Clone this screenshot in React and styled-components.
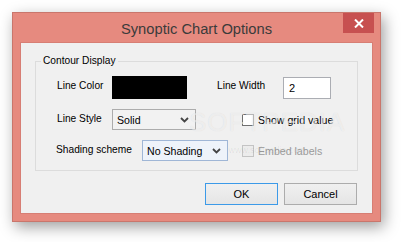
import React from 'react'
import styled, { createGlobalStyle } from 'styled-components'

const GlobalStyle = createGlobalStyle`
  html, body {
    margin: 0;
    padding: 0;
    background: #ffffff;
  }
  body {
    font-family: 'Liberation Sans', Arial, sans-serif;
  }
`

const Page = styled.div`
  width: 401px;
  height: 242px;
  padding: 12px 0 0 12px;
  box-sizing: border-box;
  overflow: hidden;
`

const Window = styled.div`
  width: 369px;
  height: 210px;
  box-sizing: border-box;
  background: #e68a7f;
  border: 1px solid #c9766c;
  box-shadow: 3px 5px 14px rgba(0, 0, 0, 0.38);
  display: flex;
  flex-direction: column;
  padding: 0 7px 7px 7px;
`

const TitleBar = styled.div`
  position: relative;
  height: 29px;
  display: flex;
  align-items: center;
  justify-content: center;
  flex-shrink: 0;
`

const Title = styled.span`
  font-size: 14.7px;
  color: #3b3b3b;
  margin-top: 2px;
`

const CloseButton = styled.div`
  position: absolute;
  top: 0;
  right: -1px;
  width: 31px;
  height: 20px;
  background: #c75050;
  display: flex;
  align-items: center;
  justify-content: center;
`

const Client = styled.div`
  flex: 1;
  background: #f0f0f0;
  border: 1px solid #d77e74;
  display: flex;
  flex-direction: column;
  padding: 0 14px 0 14px;
  position: relative;
  font-size: 10.2px;
  color: #000;
`

const Group = styled.fieldset`
  margin: 12px 0 0 0;
  padding: 9px 0 7px 0;
  border: 1px solid #dcdcdc;
  display: flex;
  flex-direction: column;
  gap: 10px;
  height: 116px;
  box-sizing: border-box;
`

const Legend = styled.legend`
  margin-left: 5px;
  padding: 0 3px 0 2px;
  font-size: 10.2px;
  line-height: 12px;
`

const Row = styled.div`
  display: flex;
  align-items: center;
  height: ${p => p.$h}px;
  padding-left: ${p => p.$indent}px;
`

const Label = styled.span`
  width: ${p => p.$w}px;
  flex-shrink: 0;
  margin-top: ${p => p.$dy || 0}px;
`

const Swatch = styled.div`
  width: 75px;
  height: 23px;
  background: #000;
  margin-right: 30px;
`

const TextBox = styled.div`
  width: 48px;
  height: 22px;
  box-sizing: border-box;
  border: 1px solid #abadb3;
  background: #fff;
  display: flex;
  align-items: center;
  padding-left: 5px;
  font-size: 11px;
`

const Select = styled.div`
  width: ${p => p.$w}px;
  height: 21px;
  box-sizing: border-box;
  border: 1px solid ${p => (p.$focus ? '#9fb6d6' : '#acacac')};
  background: ${p => (p.$focus ? '#eef3fa' : '#f2f2f2')};
  display: flex;
  align-items: center;
  justify-content: space-between;
  padding: 0 6px 0 4px;
  margin-right: ${p => p.$mr}px;
  font-size: 10.6px;
`

const Check = styled.label`
  display: flex;
  align-items: center;
  gap: 4px;
  color: ${p => (p.$disabled ? '#9a9a9a' : '#000')};
  font-size: 10.6px;
`

const Box = styled.span`
  width: 12px;
  height: 12px;
  box-sizing: border-box;
  border: 1px solid ${p => (p.$disabled ? '#c4c4c4' : '#707070')};
  background: ${p => (p.$disabled ? '#ececec' : '#fff')};
`

const Buttons = styled.div`
  display: flex;
  justify-content: flex-end;
  gap: 6px;
  margin-top: 12px;
  padding-right: 1px;
`

const Button = styled.div`
  width: 73px;
  height: 22px;
  box-sizing: border-box;
  border: 1px solid ${p => (p.$default ? '#3c9ae8' : '#acacac')};
  background: linear-gradient(#f0f0f0, #e5e5e5);
  display: flex;
  align-items: center;
  justify-content: center;
  font-size: 11px;
`

const Watermark = styled.div`
  position: absolute;
  left: 168px;
  top: 64px;
  pointer-events: none;
  display: flex;
  flex-direction: column;
  align-items: center;
  color: rgba(255, 255, 255, 0.55);
  text-shadow: 0 0 1px rgba(0, 0, 0, 0.1);
`

const MarkBig = styled.span`
  font-size: 26px;
  letter-spacing: 1px;
`

const MarkSmall = styled.span`
  font-size: 9px;
  margin-top: 7px;
  color: rgba(0, 0, 0, 0.08);
  text-shadow: none;
`

const Chevron = () => (
  <svg width="9" height="6" viewBox="0 0 9 6">
    <path d="M1 1 L4.5 4.5 L8 1" fill="none" stroke="#444" strokeWidth="1.8" />
  </svg>
)

export default function App() {
  return (
    <Page>
      <GlobalStyle />
      <Window>
        <TitleBar>
          <Title>Synoptic Chart Options</Title>
          <CloseButton>
            <svg width="10" height="9" viewBox="0 0 10 9">
              <path d="M1 0.5 L9 8.5 M9 0.5 L1 8.5" stroke="#fff" strokeWidth="2" />
            </svg>
          </CloseButton>
        </TitleBar>
        <Client>
          <Group>
            <Legend>Contour Display</Legend>
            <Row $h={23} $indent={21}>
              <Label $w={55} $dy={-4}>Line Color</Label>
              <Swatch />
              <Label $w={66} $dy={-4}>Line Width</Label>
              <TextBox>2</TextBox>
            </Row>
            <Row $h={21} $indent={21}>
              <Label $w={55} $dy={-3}>Line Style</Label>
              <Select $w={84} $mr={46}>
                Solid
                <Chevron />
              </Select>
              <Check>
                <Box />
                Show grid value
              </Check>
            </Row>
            <Row $h={21} $indent={20}>
              <Label $w={86} $dy={-3}>Shading scheme</Label>
              <Select $w={86} $mr={14} $focus>
                No Shading
                <Chevron />
              </Select>
              <Check $disabled>
                <Box $disabled />
                Embed labels
              </Check>
            </Row>
          </Group>
          <Buttons>
            <Button $default>OK</Button>
            <Button>Cancel</Button>
          </Buttons>
          <Watermark>
            <MarkBig>SOFTPEDIA</MarkBig>
            <MarkSmall>www.softpedia.com</MarkSmall>
          </Watermark>
        </Client>
      </Window>
    </Page>
  )
}
